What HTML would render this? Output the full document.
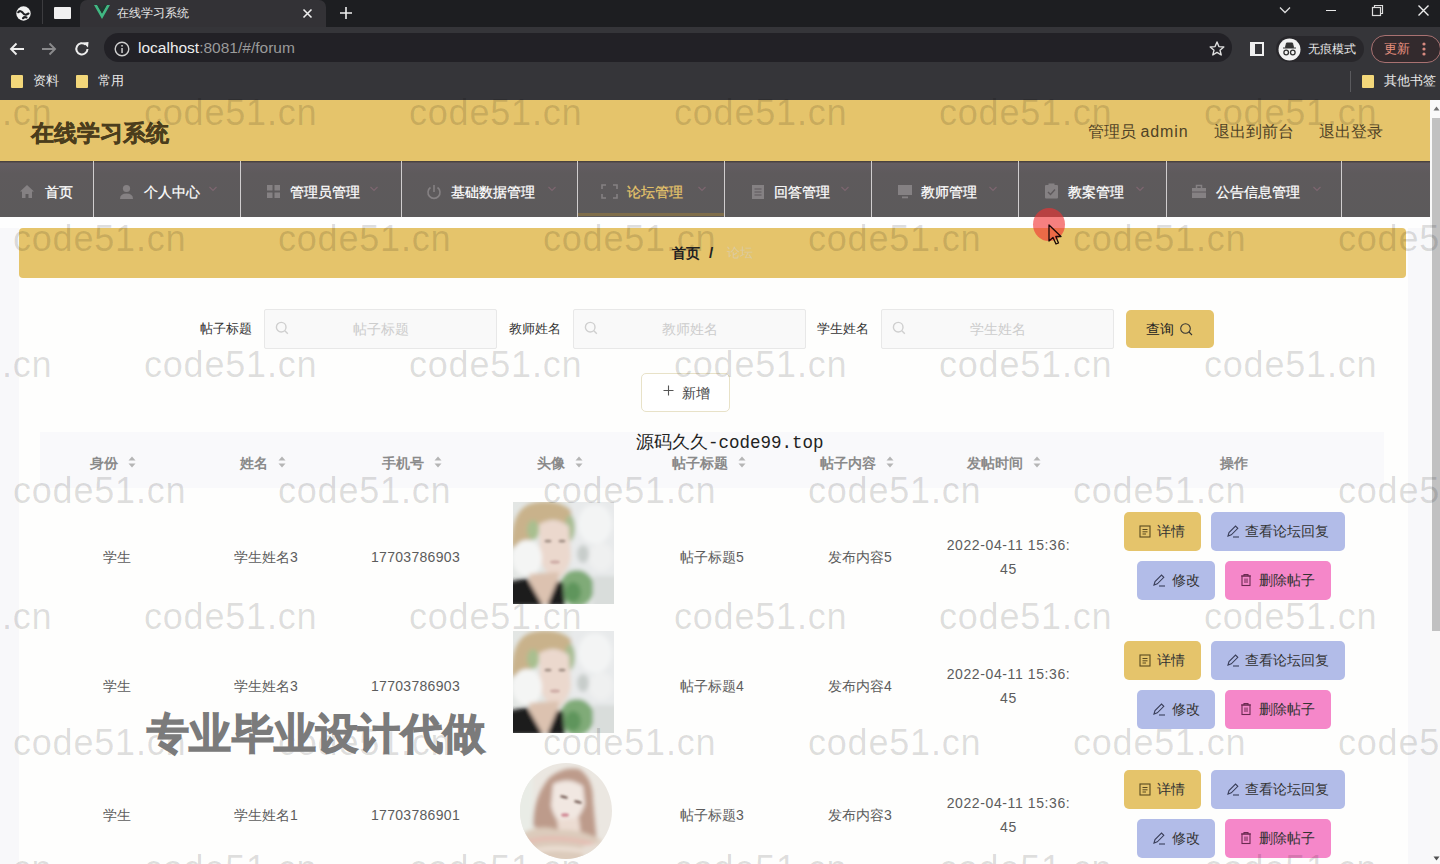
<!DOCTYPE html>
<html><head><meta charset="utf-8">
<style>
*{margin:0;padding:0;box-sizing:border-box}
html,body{width:1440px;height:864px;overflow:hidden;background:#f8f8fa;font-family:"Liberation Sans",sans-serif}
.a{position:absolute}
svg{display:block}
#tabs{left:0;top:0;width:1440px;height:27px;background:#1d1e21}
#tab{left:80px;top:0;width:246px;height:27px;background:#333236;border-radius:7px 7px 0 0}
#toolbar{left:0;top:27px;width:1440px;height:38px;background:#353539}
#omni{left:104px;top:33px;width:1128px;height:29px;background:#222126;border-radius:15px}
#bm{left:0;top:65px;width:1440px;height:35px;background:#353539}
.wt{color:#e8e8e8;font-size:12.5px;white-space:nowrap;line-height:16px}
.fold{width:12px;height:13px;background:#f3d77a;border-radius:1px}
#hdr{left:0;top:100px;width:1430px;height:61px;background:#e5c46b}
#nav{left:0;top:161px;width:1430px;height:56px;background:linear-gradient(#4a4240 0,#4a4240 1px,#645d63 2px,#5e5a5c 12px,#5c5a5b 100%)}
.sep{top:161px;width:1px;height:56px;background:#d0cdce}
.ni{top:183px;font-size:14px;color:#fff;white-space:nowrap;line-height:18px;-webkit-text-stroke:.25px currentColor}
.nic{top:183px;width:14px;height:16px}
.car{top:185px;width:12px;height:8px}
#sb{left:1430px;top:100px;width:10px;height:764px;background:#f9f9f9}
#thumb{left:1432px;top:118px;width:8px;height:513px;background:#c1c1c1}
#page{left:0;top:99px;width:1430px;height:765px;overflow:hidden}
#panel{left:19px;top:217px;width:1389px;height:647px;background:#fefefd}
#crumb{left:19px;top:228px;width:1387px;height:50px;background:#e5c46b;border-radius:4px}
.lbl{font-size:13px;color:#333;white-space:nowrap;line-height:16px}
.inp{height:40px;background:#f9f9f9;border:1px solid #e8e8e8;border-radius:2px}
.ph{font-size:14px;color:#cdcdcd;white-space:nowrap;line-height:18px}
.btn{border-radius:5px;font-size:13px;color:#333;white-space:nowrap;text-align:center;height:39px;line-height:39px}
.by{background:#e5c46b}
.bl{background:#b2bce8}
.bt{font-size:13.8px;color:#333;white-space:nowrap;line-height:18px}
.bp{background:#f587c9}
#thead{left:40px;top:432px;width:1344px;height:56px;background:#f9f9fb}
.th{top:454px;font-size:14px;color:#8a8a8a;font-weight:bold;white-space:nowrap;line-height:18px}
.td{font-size:14px;color:#5c5c5c;white-space:nowrap;line-height:18px;text-align:center;width:148px}
.av{width:101px;height:102px}
.wm{font-size:36px;color:rgba(0,0,0,.13);white-space:nowrap;line-height:40px;letter-spacing:.8px}
</style></head><body>
<svg width="0" height="0" style="position:absolute">
<defs>
<filter id="bl1" x="-10%" y="-10%" width="120%" height="120%"><feGaussianBlur stdDeviation="2.2"/></filter>
<filter id="bl2" x="-10%" y="-10%" width="120%" height="120%"><feGaussianBlur stdDeviation="1.2"/></filter>
<clipPath id="sq"><rect x="0" y="0" width="101" height="102"/></clipPath>
<clipPath id="circ"><ellipse cx="53" cy="51" rx="46" ry="48"/></clipPath>
<g id="boy">
 <g clip-path="url(#sq)">
  <rect width="101" height="102" fill="#e3e6e4"/>
  <g filter="url(#bl1)">
   <rect x="58" y="-5" width="48" height="80" fill="#e8eaeb"/>
   <ellipse cx="82" cy="22" rx="17" ry="20" fill="#f3f4f4"/>
   <ellipse cx="88" cy="55" rx="12" ry="14" fill="#eff0f0"/>
   <ellipse cx="70" cy="52" rx="6" ry="9" fill="#c8cdcb"/>
   <path d="M-2 46 Q-2 6 20 1 Q42 -4 58 8 L60 30 L52 22 Q40 14 28 22 L16 42 Z" fill="#c9b28b"/>
   <ellipse cx="20" cy="28" rx="6" ry="10" fill="#a9bf8f"/>
   <ellipse cx="57" cy="26" rx="5" ry="13" fill="#a7bd92"/>
   <path d="M26 22 Q42 14 56 24 L58 56 Q52 76 42 76 Q30 70 27 56 Z" fill="#ebd8cd"/>
   <ellipse cx="14" cy="56" rx="15" ry="18" fill="#f4f5f4"/>
   <path d="M16 72 L46 70 L44 102 L18 102 Z" fill="#dcc2b0"/>
   <ellipse cx="64" cy="86" rx="17" ry="18" fill="#80ab78"/>
   <ellipse cx="60" cy="90" rx="8" ry="10" fill="#5e955c"/>
   <rect x="80" y="74" width="30" height="35" fill="#d9dddb"/>
   <path d="M-5 80 L14 76 L30 104 L-5 104 Z" fill="#1b1b1b"/>
   <path d="M34 104 L44 80 L50 80 L52 104 Z" fill="#1e1e1e"/>
  </g>
  <g filter="url(#bl2)" opacity=".55">
   <ellipse cx="35" cy="39" rx="3.5" ry="1.5" fill="#6a5a50"/>
   <ellipse cx="49" cy="39" rx="3.5" ry="1.5" fill="#6a5a50"/>
   <ellipse cx="42" cy="60" rx="5" ry="1.8" fill="#b88a88"/>
  </g>
 </g>
</g>
<g id="girl">
 <g clip-path="url(#circ)">
  <rect width="101" height="101" fill="#ebe7e1"/>
  <g filter="url(#bl1)">
   <rect x="0" y="10" width="20" height="70" fill="#e9ece6"/>
   <path d="M20 66 Q20 38 36 18 Q50 6 66 9 Q80 18 80 40 L84 84 L68 84 L50 70 Q32 72 20 66 Z" fill="#bd9b8b"/>
   <path d="M40 24 Q56 16 70 26 L72 44 Q66 62 52 66 Q42 62 38 46 Z" fill="#f1e7e1"/>
   <path d="M44 60 L66 58 L68 76 L46 76 Z" fill="#ecdcd2"/>
   <path d="M4 78 Q22 62 46 70 Q66 68 88 80 L98 104 L0 104 Z" fill="#dccbbb"/>
   <path d="M8 84 Q40 72 86 86" stroke="#e6b9b0" stroke-width="3.5" fill="none"/>
   <path d="M10 94 Q44 82 90 96" stroke="#f0e4da" stroke-width="3.5" fill="none"/>
   <path d="M70 86 L100 80 L100 104 L70 104 Z" fill="#e6ddd3"/>
  </g>
  <g filter="url(#bl2)" opacity=".8">
   <ellipse cx="51" cy="37" rx="4" ry="1.4" fill="#5a4038" transform="rotate(15 51 37)"/>
   <ellipse cx="65" cy="42" rx="4" ry="1.4" fill="#5a4038" transform="rotate(15 65 42)"/>
   <ellipse cx="52" cy="55" rx="4" ry="1.8" fill="#c87080"/>
  </g>
 </g>
</g>
</defs>
</svg>
<div id="tabs" class="a"></div>
<div id="tab" class="a"></div>
<div class="a wt" style="left:117px;top:5px;font-size:12.3px">在线学习系统</div>
<div id="toolbar" class="a"></div>
<div id="omni" class="a"></div>
<div class="a" style="left:138px;top:39px;font-size:15.5px;color:#eee;white-space:nowrap;line-height:18px">localhost<span style="color:#9a9a9a">:8081/#/forum</span></div>
<div id="bm" class="a"></div>
<div class="a fold" style="left:11px;top:75px"></div>
<div class="a wt" style="left:33px;top:73px">资料</div>
<div class="a fold" style="left:76px;top:75px"></div>
<div class="a wt" style="left:98px;top:73px">常用</div>
<div class="a fold" style="left:1362px;top:75px"></div>
<div class="a wt" style="left:1384px;top:73px">其他书签</div>

<div class="a" style="left:1371px;top:35px;width:70px;height:28px;border:1.2px solid #a97272;background:#332a2d;border-radius:14px"></div>
<div class="a wt" style="left:1384px;top:41px;color:#e9907f">更新</div>
<div class="a" style="left:1276px;top:36px;width:88px;height:26px;background:#28272b;border-radius:13px;z-index:0"></div>
<div class="a wt" style="left:1308px;top:41px;font-size:12.3px">无痕模式</div>
<svg class="a" style="left:15px;top:5px" width="17" height="17" viewBox="0 0 17 17"><circle cx="8.5" cy="8.5" r="7.2" fill="#f2f2f2"/><path d="M3.2 7.2 Q5.5 5 7.5 7.5 Q9.5 10.5 11.5 9.5 L13.5 8.5 M8 13.2 Q9.5 11.5 11.5 12.5" stroke="#1d1e21" stroke-width="2.1" fill="none" stroke-linecap="round"/></svg>
<div class="a" style="left:42px;top:0;width:1px;height:24px;background:#3c3c3f"></div>
<div class="a" style="left:54px;top:7px;width:17px;height:12px;background:#f0f0f0;border-radius:1px"></div>
<svg class="a" style="left:94px;top:5px" width="16" height="15" viewBox="0 0 16 15"><path d="M0 0 L3.2 0 L8 8.5 L12.8 0 L16 0 L8 14 Z" fill="#41b883"/><path d="M3.2 0 L5.8 0 L8 4 L10.2 0 L12.8 0 L8 8.5 Z" fill="#1f3a30"/></svg>
<svg class="a" style="left:302px;top:8px" width="11" height="11" viewBox="0 0 11 11"><path d="M1.5 1.5 L9.5 9.5 M9.5 1.5 L1.5 9.5" stroke="#eee" stroke-width="1.6"/></svg>
<svg class="a" style="left:339px;top:6px" width="14" height="14" viewBox="0 0 14 14"><path d="M7 1 V13 M1 7 H13" stroke="#eee" stroke-width="1.6"/></svg>
<svg class="a" style="left:1279px;top:5px" width="12" height="10" viewBox="0 0 12 10"><path d="M1 2.5 L6 7.5 L11 2.5" stroke="#ddd" stroke-width="1.3" fill="none"/></svg>
<div class="a" style="left:1326px;top:10px;width:10px;height:1.3px;background:#e8e8e8"></div>
<svg class="a" style="left:1371px;top:4px" width="13" height="13" viewBox="0 0 13 13"><rect x="1.5" y="3.5" width="8" height="8" stroke="#ddd" stroke-width="1.2" fill="none"/><path d="M3.5 3.5 V1.5 H11.5 V9.5 H9.5" stroke="#ddd" stroke-width="1.2" fill="none"/></svg>
<svg class="a" style="left:1417px;top:4px" width="13" height="13" viewBox="0 0 13 13"><path d="M1.5 1.5 L11.5 11.5 M11.5 1.5 L1.5 11.5" stroke="#eee" stroke-width="1.4"/></svg>
<svg class="a" style="left:8px;top:40px" width="18" height="18" viewBox="0 0 18 18"><path d="M16 9 H3 M8.5 3.5 L3 9 L8.5 14.5" stroke="#eee" stroke-width="1.9" fill="none"/></svg>
<svg class="a" style="left:40px;top:40px" width="18" height="18" viewBox="0 0 18 18"><path d="M2 9 H15 M9.5 3.5 L15 9 L9.5 14.5" stroke="#8a8a8c" stroke-width="1.9" fill="none"/></svg>
<svg class="a" style="left:73px;top:40px" width="18" height="18" viewBox="0 0 18 18"><path d="M14.5 9 A5.6 5.6 0 1 1 12.6 4.6" stroke="#eee" stroke-width="2" fill="none"/><path d="M10 2.5 L15.5 2 L15 7.5 Z" fill="#eee"/></svg>
<svg class="a" style="left:114px;top:41px" width="16" height="16" viewBox="0 0 16 16"><circle cx="8" cy="8" r="6.8" stroke="#cfcfcf" stroke-width="1.4" fill="none"/><rect x="7.3" y="7" width="1.5" height="5" fill="#cfcfcf"/><rect x="7.3" y="4" width="1.5" height="1.6" fill="#cfcfcf"/></svg>
<svg class="a" style="left:1208px;top:40px" width="18" height="18" viewBox="0 0 18 18"><path d="M9 2 L10.9 6.6 L15.8 7 L12 10.2 L13.2 15 L9 12.4 L4.8 15 L6 10.2 L2.2 7 L7.1 6.6 Z" stroke="#e0e0e0" stroke-width="1.4" fill="none" stroke-linejoin="round"/></svg>
<div class="a" style="left:1250px;top:42px;width:14px;height:14px;border:2px solid #f0f0f0;border-left-width:2px"></div>
<div class="a" style="left:1250px;top:42px;width:5px;height:14px;background:#f0f0f0"></div>
<svg class="a" style="left:1278px;top:38px" width="23" height="23" viewBox="0 0 23 23"><circle cx="11.5" cy="11.5" r="11" fill="#f2f2f2"/><path d="M5 10 H18 M7.5 9.5 L8.5 5 H14.5 L15.5 9.5 Z" fill="#333" stroke="#333" stroke-width="1"/><circle cx="8.2" cy="14.5" r="2.3" stroke="#333" stroke-width="1.3" fill="none"/><circle cx="14.8" cy="14.5" r="2.3" stroke="#333" stroke-width="1.3" fill="none"/></svg>
<svg class="a" style="left:1421px;top:41px" width="6" height="16" viewBox="0 0 6 16"><circle cx="3" cy="3" r="1.6" fill="#d88a80"/><circle cx="3" cy="8" r="1.6" fill="#d88a80"/><circle cx="3" cy="13" r="1.6" fill="#d88a80"/></svg>
<div class="a" style="left:1350px;top:71px;width:1px;height:21px;background:#5a5a5e"></div>
<div id="hdr" class="a"></div>
<div class="a" style="left:31px;top:118.5px;font-size:23.3px;font-weight:bold;color:#4b3d1c;-webkit-text-stroke:.4px #4b3d1c;white-space:nowrap;line-height:28px">在线学习系统</div>
<div class="a" style="left:1088px;top:122px;font-size:16px;color:#4f4226;white-space:nowrap;line-height:20px">管理员 <span style="letter-spacing:.9px">admin</span></div>
<div class="a" style="left:1214px;top:122px;font-size:16px;color:#4f4226;white-space:nowrap;line-height:20px">退出到前台</div>
<div class="a" style="left:1319px;top:122px;font-size:16px;color:#4f4226;white-space:nowrap;line-height:20px">退出登录</div>
<div id="nav" class="a"></div>
<div class="a sep" style="left:93px"></div>
<div class="a sep" style="left:240px"></div>
<div class="a sep" style="left:401px"></div>
<div class="a sep" style="left:577px"></div>
<div class="a sep" style="left:724px"></div>
<div class="a sep" style="left:871px"></div>
<div class="a sep" style="left:1018px"></div>
<div class="a sep" style="left:1166px"></div>
<div class="a sep" style="left:1341px"></div>
<div class="a" style="left:578px;top:213px;width:146px;height:3px;background:#7f6d4a"></div>
<div class="a ni" style="left:45px">首页</div>
<div class="a ni" style="left:144px">个人中心</div>
<div class="a ni" style="left:290px">管理员管理</div>
<div class="a ni" style="left:451px">基础数据管理</div>
<div class="a ni" style="left:627px;color:#e5c46b">论坛管理</div>
<div class="a ni" style="left:774px">回答管理</div>
<div class="a ni" style="left:921px">教师管理</div>
<div class="a ni" style="left:1068px">教案管理</div>
<div class="a ni" style="left:1216px">公告信息管理</div>
<div id="sb" class="a"></div>
<div id="thumb" class="a"></div>
<div id="panel" class="a"></div>
<div class="a" style="left:0;top:217px;width:1430px;height:11px;background:#fefefe"></div>
<div id="crumb" class="a"></div>
<div class="a lbl" style="left:672px;top:245px;color:#222;font-weight:bold;font-size:14px">首页</div>
<div class="a lbl" style="left:709px;top:245px;color:#222;font-size:15px;font-weight:bold">/</div>
<div class="a lbl" style="left:727px;top:245px;color:#dccb9f;font-size:12.5px">论坛</div>
<div class="a lbl" style="left:200px;top:321px">帖子标题</div>
<div class="a inp" style="left:264px;top:309px;width:233px"></div>
<div class="a ph" style="left:353px;top:320px">帖子标题</div>
<div class="a lbl" style="left:509px;top:321px">教师姓名</div>
<div class="a inp" style="left:573px;top:309px;width:233px"></div>
<div class="a ph" style="left:662px;top:320px">教师姓名</div>
<div class="a lbl" style="left:817px;top:321px">学生姓名</div>
<div class="a inp" style="left:881px;top:309px;width:233px"></div>
<div class="a ph" style="left:970px;top:320px">学生姓名</div>
<div class="a btn" style="left:1126px;top:310px;width:88px;height:38px;background:#e5c46b"></div>
<div class="a lbl" style="left:1146px;top:320px;font-size:14px;line-height:18px;color:#222">查询</div>
<div class="a btn" style="left:641px;top:373px;width:89px;height:39px;background:#fff;border:1px solid #e8e2c8"></div>
<svg class="a" style="left:663px;top:385px" width="11" height="11" viewBox="0 0 11 11"><path d="M5.5 0.5 V10.5 M0.5 5.5 H10.5" stroke="#555" stroke-width="1.1"/></svg>
<div class="a lbl" style="left:682px;top:384px;font-size:14px;line-height:18px;color:#444">新增</div>
<div id="thead" class="a"></div>
<div class="a th" style="left:90px">身份</div>
<div class="a th" style="left:240px">姓名</div>
<div class="a th" style="left:382px">手机号</div>
<div class="a th" style="left:537px">头像</div>
<div class="a th" style="left:672px">帖子标题</div>
<div class="a th" style="left:820px">帖子内容</div>
<div class="a th" style="left:967px">发帖时间</div>
<div class="a th" style="left:1220px">操作</div>
<svg class="a" style="left:19px;top:184px" width="16" height="15" viewBox="0 0 16 15"><path d="M8 1 L15 7.5 L13 7.5 L13 14 L9.5 14 L9.5 10 L6.5 10 L6.5 14 L3 14 L3 7.5 L1 7.5 Z" fill="#858183"/></svg>
<svg class="a" style="left:119px;top:184px" width="15" height="15" viewBox="0 0 15 15"><circle cx="7.5" cy="4.5" r="3.6" fill="#858183"/><path d="M1 15 Q1 9.5 7.5 9.5 Q14 9.5 14 15 Z" fill="#858183"/></svg>
<svg class="a" style="left:266px;top:184px" width="15" height="15" viewBox="0 0 15 15"><rect x="1" y="1" width="5.5" height="5.5" fill="#858183"/><rect x="8.5" y="1" width="5.5" height="5.5" fill="#858183"/><rect x="1" y="8.5" width="5.5" height="5.5" fill="#858183"/><rect x="8.5" y="8.5" width="5.5" height="5.5" fill="#858183"/></svg>
<svg class="a" style="left:426px;top:184px" width="16" height="16" viewBox="0 0 16 16"><path d="M4.5 3.5 A6 6 0 1 0 11.5 3.5" stroke="#858183" stroke-width="1.6" fill="none"/><path d="M8 1 V8" stroke="#858183" stroke-width="1.6"/></svg>
<svg class="a" style="left:601px;top:184px" width="17" height="15" viewBox="0 0 17 15"><path d="M1 5 V1 H5 M12 1 H16 V5 M16 10 V14 H12 M5 14 H1 V10" stroke="#858183" stroke-width="1.6" fill="none"/></svg>
<svg class="a" style="left:751px;top:184px" width="14" height="16" viewBox="0 0 14 16"><path d="M1 1 H13 V15 H1 Z" fill="#858183"/><path d="M3.5 5 H10.5 M3.5 8 H10.5 M3.5 11 H10.5" stroke="#5e595c" stroke-width="1.2"/></svg>
<svg class="a" style="left:897px;top:184px" width="16" height="15" viewBox="0 0 16 15"><rect x="1" y="1" width="14" height="10" fill="#858183"/><rect x="5" y="12.5" width="6" height="1.8" fill="#858183"/></svg>
<svg class="a" style="left:1044px;top:183px" width="15" height="16" viewBox="0 0 15 16"><rect x="1" y="2" width="13" height="13.5" rx="1" fill="#858183"/><rect x="4.5" y="0.5" width="6" height="3" fill="#858183"/><path d="M4 9 L6.5 11.5 L11 6.5" stroke="#5e595c" stroke-width="1.4" fill="none"/></svg>
<svg class="a" style="left:1191px;top:184px" width="16" height="15" viewBox="0 0 16 15"><rect x="1" y="4" width="14" height="10" fill="#858183"/><path d="M5.5 4 V1.5 H10.5 V4" stroke="#858183" stroke-width="1.5" fill="none"/><path d="M1 8 H15" stroke="#5e595c" stroke-width="1"/></svg>
<svg class="a" style="left:208px;top:185px" width="10" height="8" viewBox="0 0 10 8"><path d="M1.5 2 L5 5.5 L8.5 2" stroke="#7d6670" stroke-width="1.2" fill="none"/></svg>
<svg class="a" style="left:369px;top:185px" width="10" height="8" viewBox="0 0 10 8"><path d="M1.5 2 L5 5.5 L8.5 2" stroke="#7d6670" stroke-width="1.2" fill="none"/></svg>
<svg class="a" style="left:547px;top:185px" width="10" height="8" viewBox="0 0 10 8"><path d="M1.5 2 L5 5.5 L8.5 2" stroke="#7d6670" stroke-width="1.2" fill="none"/></svg>
<svg class="a" style="left:697px;top:185px" width="10" height="8" viewBox="0 0 10 8"><path d="M1.5 2 L5 5.5 L8.5 2" stroke="#7d6670" stroke-width="1.2" fill="none"/></svg>
<svg class="a" style="left:840px;top:185px" width="10" height="8" viewBox="0 0 10 8"><path d="M1.5 2 L5 5.5 L8.5 2" stroke="#7d6670" stroke-width="1.2" fill="none"/></svg>
<svg class="a" style="left:988px;top:185px" width="10" height="8" viewBox="0 0 10 8"><path d="M1.5 2 L5 5.5 L8.5 2" stroke="#7d6670" stroke-width="1.2" fill="none"/></svg>
<svg class="a" style="left:1135px;top:185px" width="10" height="8" viewBox="0 0 10 8"><path d="M1.5 2 L5 5.5 L8.5 2" stroke="#7d6670" stroke-width="1.2" fill="none"/></svg>
<svg class="a" style="left:1312px;top:185px" width="10" height="8" viewBox="0 0 10 8"><path d="M1.5 2 L5 5.5 L8.5 2" stroke="#7d6670" stroke-width="1.2" fill="none"/></svg>
<div class="a td" style="left:42.5px;top:548px">学生</div>
<div class="a td" style="left:192.0px;top:548px">学生姓名3</div>
<div class="a td" style="left:341.5px;top:548px;letter-spacing:.3px">17703786903</div>
<div class="a td" style="left:638.0px;top:548px">帖子标题5</div>
<div class="a td" style="left:786.0px;top:548px">发布内容5</div>
<div class="a td" style="left:934.5px;top:533px;line-height:24px;letter-spacing:.6px">2022-04-11 15:36:<br>45</div>
<svg class="a" style="left:513px;top:502px" width="101" height="102"><use href="#boy"/></svg>
<div class="a td" style="left:42.5px;top:677px">学生</div>
<div class="a td" style="left:192.0px;top:677px">学生姓名3</div>
<div class="a td" style="left:341.5px;top:677px;letter-spacing:.3px">17703786903</div>
<div class="a td" style="left:638.0px;top:677px">帖子标题4</div>
<div class="a td" style="left:786.0px;top:677px">发布内容4</div>
<div class="a td" style="left:934.5px;top:662px;line-height:24px;letter-spacing:.6px">2022-04-11 15:36:<br>45</div>
<svg class="a" style="left:513px;top:631px" width="101" height="102"><use href="#boy"/></svg>
<div class="a td" style="left:42.5px;top:806px">学生</div>
<div class="a td" style="left:192.0px;top:806px">学生姓名1</div>
<div class="a td" style="left:341.5px;top:806px;letter-spacing:.3px">17703786901</div>
<div class="a td" style="left:638.0px;top:806px">帖子标题3</div>
<div class="a td" style="left:786.0px;top:806px">发布内容3</div>
<div class="a td" style="left:934.5px;top:791px;line-height:24px;letter-spacing:.6px">2022-04-11 15:36:<br>45</div>
<svg class="a" style="left:513px;top:760px" width="101" height="101"><use href="#girl"/></svg>

<div class="a btn by" style="left:1124px;top:512px;width:77px"></div>
<div class="a btn bl" style="left:1211px;top:512px;width:134px"></div>
<div class="a btn bl" style="left:1137px;top:561px;width:78px"></div>
<div class="a btn bp" style="left:1225px;top:561px;width:106px"></div>
<div class="a bt" style="left:1157px;top:523px">详情</div>
<div class="a bt" style="left:1245px;top:523px">查看论坛回复</div>
<div class="a bt" style="left:1172px;top:572px">修改</div>
<div class="a bt" style="left:1259px;top:572px">删除帖子</div>
<div class="a btn by" style="left:1124px;top:641px;width:77px"></div>
<div class="a btn bl" style="left:1211px;top:641px;width:134px"></div>
<div class="a btn bl" style="left:1137px;top:690px;width:78px"></div>
<div class="a btn bp" style="left:1225px;top:690px;width:106px"></div>
<div class="a bt" style="left:1157px;top:652px">详情</div>
<div class="a bt" style="left:1245px;top:652px">查看论坛回复</div>
<div class="a bt" style="left:1172px;top:701px">修改</div>
<div class="a bt" style="left:1259px;top:701px">删除帖子</div>
<div class="a btn by" style="left:1124px;top:770px;width:77px"></div>
<div class="a btn bl" style="left:1211px;top:770px;width:134px"></div>
<div class="a btn bl" style="left:1137px;top:819px;width:78px"></div>
<div class="a btn bp" style="left:1225px;top:819px;width:106px"></div>
<div class="a bt" style="left:1157px;top:781px">详情</div>
<div class="a bt" style="left:1245px;top:781px">查看论坛回复</div>
<div class="a bt" style="left:1172px;top:830px">修改</div>
<div class="a bt" style="left:1259px;top:830px">删除帖子</div>
<svg class="a" style="left:128px;top:456px" width="8" height="12" viewBox="0 0 8 12"><path d="M4 0.5 L7.5 4.5 H0.5 Z" fill="#b5b5b5"/><path d="M4 11.5 L7.5 7.5 H0.5 Z" fill="#b5b5b5"/></svg>
<svg class="a" style="left:278px;top:456px" width="8" height="12" viewBox="0 0 8 12"><path d="M4 0.5 L7.5 4.5 H0.5 Z" fill="#b5b5b5"/><path d="M4 11.5 L7.5 7.5 H0.5 Z" fill="#b5b5b5"/></svg>
<svg class="a" style="left:434px;top:456px" width="8" height="12" viewBox="0 0 8 12"><path d="M4 0.5 L7.5 4.5 H0.5 Z" fill="#b5b5b5"/><path d="M4 11.5 L7.5 7.5 H0.5 Z" fill="#b5b5b5"/></svg>
<svg class="a" style="left:575px;top:456px" width="8" height="12" viewBox="0 0 8 12"><path d="M4 0.5 L7.5 4.5 H0.5 Z" fill="#b5b5b5"/><path d="M4 11.5 L7.5 7.5 H0.5 Z" fill="#b5b5b5"/></svg>
<svg class="a" style="left:738px;top:456px" width="8" height="12" viewBox="0 0 8 12"><path d="M4 0.5 L7.5 4.5 H0.5 Z" fill="#b5b5b5"/><path d="M4 11.5 L7.5 7.5 H0.5 Z" fill="#b5b5b5"/></svg>
<svg class="a" style="left:886px;top:456px" width="8" height="12" viewBox="0 0 8 12"><path d="M4 0.5 L7.5 4.5 H0.5 Z" fill="#b5b5b5"/><path d="M4 11.5 L7.5 7.5 H0.5 Z" fill="#b5b5b5"/></svg>
<svg class="a" style="left:1033px;top:456px" width="8" height="12" viewBox="0 0 8 12"><path d="M4 0.5 L7.5 4.5 H0.5 Z" fill="#b5b5b5"/><path d="M4 11.5 L7.5 7.5 H0.5 Z" fill="#b5b5b5"/></svg>
<svg class="a" style="left:275px;top:321px" width="14" height="14" viewBox="0 0 14 14"><circle cx="6.2" cy="6.2" r="4.8" stroke="#cfcfcf" stroke-width="1.4" fill="none"/><path d="M9.8 9.8 L12.8 12.8" stroke="#cfcfcf" stroke-width="1.4"/></svg>
<svg class="a" style="left:584px;top:321px" width="14" height="14" viewBox="0 0 14 14"><circle cx="6.2" cy="6.2" r="4.8" stroke="#cfcfcf" stroke-width="1.4" fill="none"/><path d="M9.8 9.8 L12.8 12.8" stroke="#cfcfcf" stroke-width="1.4"/></svg>
<svg class="a" style="left:892px;top:321px" width="14" height="14" viewBox="0 0 14 14"><circle cx="6.2" cy="6.2" r="4.8" stroke="#cfcfcf" stroke-width="1.4" fill="none"/><path d="M9.8 9.8 L12.8 12.8" stroke="#cfcfcf" stroke-width="1.4"/></svg>
<svg class="a" style="left:1179px;top:322px" width="15" height="15" viewBox="0 0 15 15"><circle cx="6.5" cy="6.5" r="4.8" stroke="#333" stroke-width="1.05" fill="none"/><path d="M10 10 L13 13" stroke="#333" stroke-width="1.1"/></svg>
<svg class="a" style="left:1139px;top:525px" width="12" height="13" viewBox="0 0 12 13"><rect x="1" y="1" width="10" height="11" stroke="#5a4a20" stroke-width="1.1" fill="none"/><path d="M3.5 4.5 H8.5 M3.5 6.8 H8.5 M3.5 9 H7" stroke="#5a4a20" stroke-width="1"/></svg>
<svg class="a" style="left:1226px;top:524px" width="14" height="14" viewBox="0 0 14 14"><path d="M2 12 L3 8.5 L9.5 2 L11.8 4.3 L5.3 10.8 Z" stroke="#3a3f5a" stroke-width="1.1" fill="none"/><path d="M7 13 H13" stroke="#3a3f5a" stroke-width="1.1"/></svg>
<svg class="a" style="left:1152px;top:573px" width="14" height="14" viewBox="0 0 14 14"><path d="M2 12 L3 8.5 L9.5 2 L11.8 4.3 L5.3 10.8 Z" stroke="#3a3f5a" stroke-width="1.1" fill="none"/><path d="M7 13 H13" stroke="#3a3f5a" stroke-width="1.1"/></svg>
<svg class="a" style="left:1240px;top:573px" width="12" height="14" viewBox="0 0 12 14"><path d="M1 3 H11 M4 3 V1.5 H8 V3" stroke="#6a2a50" stroke-width="1.1" fill="none"/><rect x="2" y="3" width="8" height="9.5" stroke="#6a2a50" stroke-width="1.1" fill="none"/><path d="M5 5.5 V10 M7 5.5 V10" stroke="#6a2a50" stroke-width="1"/></svg>
<svg class="a" style="left:1139px;top:654px" width="12" height="13" viewBox="0 0 12 13"><rect x="1" y="1" width="10" height="11" stroke="#5a4a20" stroke-width="1.1" fill="none"/><path d="M3.5 4.5 H8.5 M3.5 6.8 H8.5 M3.5 9 H7" stroke="#5a4a20" stroke-width="1"/></svg>
<svg class="a" style="left:1226px;top:653px" width="14" height="14" viewBox="0 0 14 14"><path d="M2 12 L3 8.5 L9.5 2 L11.8 4.3 L5.3 10.8 Z" stroke="#3a3f5a" stroke-width="1.1" fill="none"/><path d="M7 13 H13" stroke="#3a3f5a" stroke-width="1.1"/></svg>
<svg class="a" style="left:1152px;top:702px" width="14" height="14" viewBox="0 0 14 14"><path d="M2 12 L3 8.5 L9.5 2 L11.8 4.3 L5.3 10.8 Z" stroke="#3a3f5a" stroke-width="1.1" fill="none"/><path d="M7 13 H13" stroke="#3a3f5a" stroke-width="1.1"/></svg>
<svg class="a" style="left:1240px;top:702px" width="12" height="14" viewBox="0 0 12 14"><path d="M1 3 H11 M4 3 V1.5 H8 V3" stroke="#6a2a50" stroke-width="1.1" fill="none"/><rect x="2" y="3" width="8" height="9.5" stroke="#6a2a50" stroke-width="1.1" fill="none"/><path d="M5 5.5 V10 M7 5.5 V10" stroke="#6a2a50" stroke-width="1"/></svg>
<svg class="a" style="left:1139px;top:783px" width="12" height="13" viewBox="0 0 12 13"><rect x="1" y="1" width="10" height="11" stroke="#5a4a20" stroke-width="1.1" fill="none"/><path d="M3.5 4.5 H8.5 M3.5 6.8 H8.5 M3.5 9 H7" stroke="#5a4a20" stroke-width="1"/></svg>
<svg class="a" style="left:1226px;top:782px" width="14" height="14" viewBox="0 0 14 14"><path d="M2 12 L3 8.5 L9.5 2 L11.8 4.3 L5.3 10.8 Z" stroke="#3a3f5a" stroke-width="1.1" fill="none"/><path d="M7 13 H13" stroke="#3a3f5a" stroke-width="1.1"/></svg>
<svg class="a" style="left:1152px;top:831px" width="14" height="14" viewBox="0 0 14 14"><path d="M2 12 L3 8.5 L9.5 2 L11.8 4.3 L5.3 10.8 Z" stroke="#3a3f5a" stroke-width="1.1" fill="none"/><path d="M7 13 H13" stroke="#3a3f5a" stroke-width="1.1"/></svg>
<svg class="a" style="left:1240px;top:831px" width="12" height="14" viewBox="0 0 12 14"><path d="M1 3 H11 M4 3 V1.5 H8 V3" stroke="#6a2a50" stroke-width="1.1" fill="none"/><rect x="2" y="3" width="8" height="9.5" stroke="#6a2a50" stroke-width="1.1" fill="none"/><path d="M5 5.5 V10 M7 5.5 V10" stroke="#6a2a50" stroke-width="1"/></svg>
<svg class="a" style="left:1433px;top:106px" width="7" height="5" viewBox="0 0 7 5"><path d="M3.5 0.5 L6.5 4.5 H0.5 Z" fill="#707070"/></svg>
<svg class="a" style="left:1433px;top:856px" width="7" height="5" viewBox="0 0 7 5"><path d="M3.5 4.5 L6.5 0.5 H0.5 Z" fill="#505050"/></svg>
<div id="wmwrap" class="a" style="left:0;top:0;width:1440px;height:864px;overflow:hidden"><div class="a" style="left:0;top:0;width:1440px;height:1000px">
<div class="a wm" style="left:-121px;top:93px">code51.cn</div>
<div class="a wm" style="left:144px;top:93px">code51.cn</div>
<div class="a wm" style="left:409px;top:93px">code51.cn</div>
<div class="a wm" style="left:674px;top:93px">code51.cn</div>
<div class="a wm" style="left:939px;top:93px">code51.cn</div>
<div class="a wm" style="left:1204px;top:93px">code51.cn</div>
<div class="a wm" style="left:13px;top:219px">code51.cn</div>
<div class="a wm" style="left:278px;top:219px">code51.cn</div>
<div class="a wm" style="left:543px;top:219px">code51.cn</div>
<div class="a wm" style="left:808px;top:219px">code51.cn</div>
<div class="a wm" style="left:1073px;top:219px">code51.cn</div>
<div class="a wm" style="left:1338px;top:219px">code51.cn</div>
<div class="a wm" style="left:-121px;top:345px">code51.cn</div>
<div class="a wm" style="left:144px;top:345px">code51.cn</div>
<div class="a wm" style="left:409px;top:345px">code51.cn</div>
<div class="a wm" style="left:674px;top:345px">code51.cn</div>
<div class="a wm" style="left:939px;top:345px">code51.cn</div>
<div class="a wm" style="left:1204px;top:345px">code51.cn</div>
<div class="a wm" style="left:13px;top:471px">code51.cn</div>
<div class="a wm" style="left:278px;top:471px">code51.cn</div>
<div class="a wm" style="left:543px;top:471px">code51.cn</div>
<div class="a wm" style="left:808px;top:471px">code51.cn</div>
<div class="a wm" style="left:1073px;top:471px">code51.cn</div>
<div class="a wm" style="left:1338px;top:471px">code51.cn</div>
<div class="a wm" style="left:-121px;top:597px">code51.cn</div>
<div class="a wm" style="left:144px;top:597px">code51.cn</div>
<div class="a wm" style="left:409px;top:597px">code51.cn</div>
<div class="a wm" style="left:674px;top:597px">code51.cn</div>
<div class="a wm" style="left:939px;top:597px">code51.cn</div>
<div class="a wm" style="left:1204px;top:597px">code51.cn</div>
<div class="a wm" style="left:13px;top:723px">code51.cn</div>
<div class="a wm" style="left:278px;top:723px">code51.cn</div>
<div class="a wm" style="left:543px;top:723px">code51.cn</div>
<div class="a wm" style="left:808px;top:723px">code51.cn</div>
<div class="a wm" style="left:1073px;top:723px">code51.cn</div>
<div class="a wm" style="left:1338px;top:723px">code51.cn</div>
<div class="a wm" style="left:-121px;top:849px">code51.cn</div>
<div class="a wm" style="left:144px;top:849px">code51.cn</div>
<div class="a wm" style="left:409px;top:849px">code51.cn</div>
<div class="a wm" style="left:674px;top:849px">code51.cn</div>
<div class="a wm" style="left:939px;top:849px">code51.cn</div>
<div class="a wm" style="left:1204px;top:849px">code51.cn</div></div></div>
<div class="a" style="left:636px;top:431px;font-size:17.5px;color:#222;white-space:nowrap;line-height:22px">源码久久<span style="font-family:'Liberation Mono',monospace">-code99.top</span></div>
<div class="a" style="left:147px;top:708px;font-size:42px;letter-spacing:.3px;font-weight:900;color:#7b7b7b;-webkit-text-stroke:1.3px #7b7b7b;white-space:nowrap;line-height:52px;text-shadow:0 0 3px #fff,0 0 2px #fff">专业毕业设计代做</div>
<div class="a" style="left:1033px;top:208px;width:32px;height:33px;border-radius:50%;background:rgba(240,50,50,.62)"></div>
<svg class="a" style="left:1048px;top:224px" width="14" height="22" viewBox="0 0 14 22"><path d="M1 1 L1 17 L5 13.5 L8 20 L10.5 19 L7.8 12.5 L13 12.5 Z" fill="none" stroke="#1a0808" stroke-width="1.3" stroke-linejoin="round"/></svg>

</body></html>
